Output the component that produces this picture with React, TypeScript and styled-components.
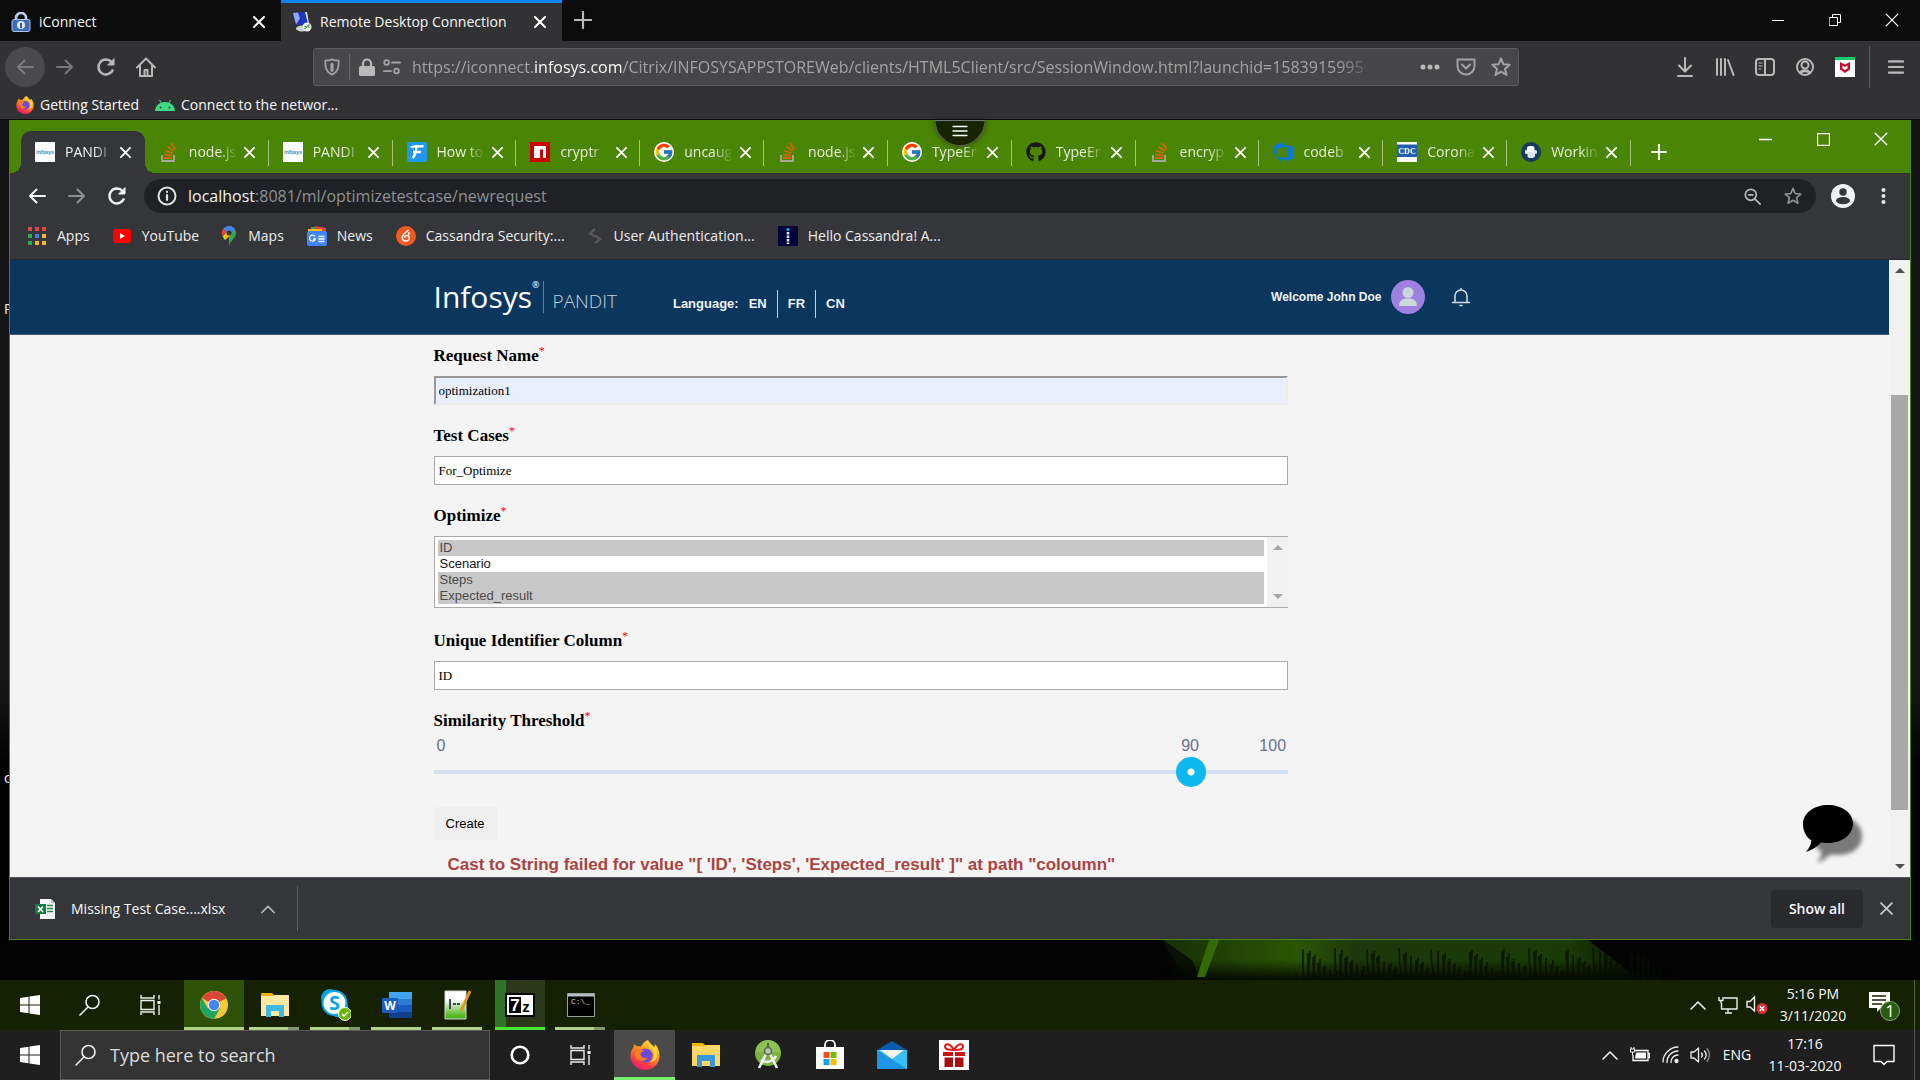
import React from "react";
import styled, { createGlobalStyle, css } from "styled-components";
import { FaGithub } from "react-icons/fa";
import { FcGoogle } from "react-icons/fc";

const UI = `"Open Sans", "Noto Sans", sans-serif`;
const ARIAL = `"Liberation Sans", Arial, sans-serif`;
const TIMES = `"Liberation Serif", "Times New Roman", serif`;

const GlobalStyle = createGlobalStyle`
  *, *::before, *::after { box-sizing: border-box; }
  body { margin: 0; background: #000; font-family: ${UI}; }
  button, input, select { font: inherit; color: inherit; }
  button { border: 0; padding: 0; background: none; cursor: pointer; }
  a { color: inherit; text-decoration: none; }
  svg { display: block; flex: none; }
`;

const Screen = styled.div`
  display: flex;
  flex-direction: column;
  min-height: 100vh;
  overflow: hidden;
  font-size: 14px;
  line-height: 20px;
  color: #f9f9fa;
`;

const IconButton = styled.button<{ $w?: number; $h?: number; $round?: boolean }>`
  display: flex;
  align-items: center;
  justify-content: center;
  flex: none;
  width: ${(p) => p.$w ?? 40}px;
  height: ${(p) => p.$h ?? 40}px;
  ${(p) => p.$round && css`background: #4a4a4c; border-radius: 50%;`}
`;

const Spacer = styled.div<{ $w?: number }>`
  flex: ${(p) => (p.$w ? `0 0 ${p.$w}px` : "1")};
`;

/* ---------- Outer browser ---------- */

const OuterTabs = styled.div`
  display: flex;
  align-items: stretch;
  height: 41px;
  background: #0c0c0d;
`;

const OuterTab = styled.div<{ $active?: boolean }>`
  display: flex;
  align-items: center;
  gap: 8px;
  width: 281px;
  padding: 0 2px 0 11px;
  border-top: 3px solid ${(p) => (p.$active ? "#0a84ff" : "transparent")};
  background: ${(p) => (p.$active ? "#323234" : "transparent")};
`;

const TabTitle = styled.span`
  flex: 1;
  white-space: nowrap;
`;

const OuterNav = styled.div`
  display: flex;
  align-items: center;
  height: 48px;
  padding: 4px 4px 0 5px;
  background: #323234;
  color: #b9b9ba;
`;

const OuterUrl = styled.div`
  display: flex;
  align-items: center;
  flex: 1;
  min-width: 0;
  height: 38px;
  border: 1px solid #5c5c5e;
  border-radius: 3px;
  background: #474749;
  color: #a3a3a5;
`;

const UrlText = styled.div`
  flex: 1;
  min-width: 0;
  margin: 0 35px 0 7px;
  overflow: hidden;
  white-space: nowrap;
  font-size: 16px;
  line-height: 24px;
  mask-image: linear-gradient(to right, #000 calc(100% - 40px), transparent);
  b { font-weight: 400; color: #f9f9fa; }
`;

const VLine = styled.span<{ $h: number; $c: string; $m?: string }>`
  flex: none;
  width: 1px;
  height: ${(p) => p.$h}px;
  margin: ${(p) => p.$m ?? "0"};
  background: ${(p) => p.$c};
`;

const OuterBookmarks = styled.div`
  display: flex;
  align-items: center;
  gap: 16px;
  height: 31px;
  padding: 2px 16px 0;
  background: #323234;
  border-bottom: 1px solid #0c0c0d;
`;

const Bookmark = styled.a<{ $gap?: number }>`
  display: flex;
  align-items: center;
  gap: ${(p) => p.$gap ?? 6}px;
  white-space: nowrap;
`;

/* ---------- Remote desktop ---------- */

const Remote = styled.div`
  position: relative;
  display: flex;
  flex-direction: column;
  flex: 1;
  padding: 0 9px;
  background: linear-gradient(#141414, #171717 65%, #020202 75%, #020202);
`;

const IconLabelPeek = styled.span<{ $top: number }>`
  position: absolute;
  left: 4px;
  top: ${(p) => p.$top}px;
  font-size: 14px;
  line-height: 20px;
`;

const Window = styled.div`
  position: relative;
  display: flex;
  flex-direction: column;
  flex: 1;
  border: 1px solid #4b8505;
  border-top: 0;
`;

const SessionHandle = styled.button`
  position: absolute;
  left: 50%;
  top: 0;
  transform: translateX(-50%);
  display: flex;
  justify-content: center;
  align-items: flex-start;
  width: 51px;
  height: 26px;
  padding-top: 3px;
  border: 1px solid #5a5f4c;
  border-top-color: #777;
  border-radius: 0 0 26px 26px;
  background: #172400;
  box-shadow: 0 0 6px rgba(0, 0, 0, 0.4);
`;

const TabStrip = styled.div`
  display: flex;
  align-items: flex-start;
  height: 53px;
  padding-left: 11px;
  background: #4b8505;
`;

const Tabs = styled.div`
  display: flex;
  flex: 0 1 1610px;
  min-width: 0;
  padding-top: 11px;
`;

const InnerTab = styled.div<{ $active?: boolean }>`
  position: relative;
  display: flex;
  align-items: center;
  flex: 1 1 0;
  min-width: 0;
  height: 42px;
  padding: 0 9px 0 14px;
  border-radius: 10px 10px 0 0;
  background: ${(p) => (p.$active ? "#35363a" : "transparent")};
  color: ${(p) => (p.$active ? "#f1f3f4" : "#e8f0df")};
  ${(p) =>
    p.$active
      ? css`
          &::before, &::after {
            content: "";
            position: absolute;
            bottom: 0;
            width: 10px;
            height: 10px;
          }
          &::before { left: -10px; background: radial-gradient(circle at 0 0, transparent 10px, #35363a 10px); }
          &::after { right: -10px; background: radial-gradient(circle at 100% 0, transparent 10px, #35363a 10px); }
        `
      : css`
          &::after {
            content: "";
            position: absolute;
            right: 0;
            top: 9px;
            width: 1px;
            height: 26px;
            background: #a5c282;
          }
        `}
`;

const InnerTitle = styled.span`
  flex: 1;
  min-width: 0;
  margin: 0 2px 0 10px;
  overflow: hidden;
  white-space: nowrap;
  mask-image: linear-gradient(to right, #000 60%, transparent);
`;

const Toolbar = styled.div`
  display: flex;
  align-items: center;
  height: 40px;
  padding: 6px 7px 0 7px;
  background: #35363a;
`;

const Omnibox = styled.div`
  display: flex;
  align-items: center;
  flex: 1;
  gap: 11px;
  height: 34px;
  margin: 0 7px;
  padding: 0 8px 0 13px;
  border-radius: 17px;
  background: #202124;
  font-size: 16px;
  line-height: 24px;
  color: #8d9196;
  b { font-weight: 400; color: #f1f3f4; }
`;

const InnerBookmarks = styled.div`
  display: flex;
  align-items: center;
  gap: 23px;
  height: 47px;
  padding: 0 18px;
  background: #35363a;
  border-bottom: 1px solid #26272a;
  color: #eceef0;
`;

/* ---------- Web page ---------- */

const Viewport = styled.div`
  display: flex;
  flex: 1 0 auto;
  height: 617px;
  overflow: hidden;
  background: #f4f4f4;
`;

const Page = styled.div`
  position: relative;
  flex: 1;
  min-width: 0;
`;

const SiteHeader = styled.header`
  height: 75px;
  background: #0b375f;
  border-bottom: 1px solid #3f5f80;
`;

const Container = styled.div`
  display: flex;
  align-items: center;
  width: 100%;
  max-width: 1032px;
  height: 100%;
  margin: 0 auto;
`;

const Logo = styled.a`
  display: flex;
  align-items: center;
  font-size: 30px;
  line-height: 40px;
  color: #fff;
  sup { align-self: flex-start; font-size: 9px; line-height: 16px; }
`;

const Product = styled.span`
  padding-top: 8px;
  font-size: 19px;
  font-weight: 300;
  line-height: 24px;
  color: #c3cfdb;
`;

const LangNav = styled.nav`
  display: flex;
  align-items: center;
  margin: 13px 0 0 56px;
  font: 700 13px/28px ${ARIAL};
  color: #eef2f6;
  a { padding: 0 10px; }
  a + a { border-left: 1px solid #c3cfdb; }
`;

const UserArea = styled.div`
  display: flex;
  align-items: center;
  gap: 9px;
  margin: 0 -22px 0 auto;
  font: 700 12px/16px ${ARIAL};
  color: #eef2f6;
`;

const FormArea = styled.main`
  max-width: 1032px;
  margin: 0 auto;
  padding-top: 10px;
`;

const Form = styled.form`
  width: 83%;
  padding-right: 2px;
  color: #000;
`;

const Field = styled.div<{ $after?: number }>`
  display: flex;
  flex-direction: column;
  margin-bottom: ${(p) => p.$after ?? 20}px;
`;

const Label = styled.label`
  margin-bottom: 9px;
  font: 700 17px/22px ${TIMES};
  sup { font-size: 12px; font-weight: 400; line-height: 0; color: #f00; vertical-align: 6px; }
`;

const TextInput = styled.input<{ $filled?: boolean }>`
  width: 100%;
  height: 29px;
  padding: 0 4px;
  border: 1px solid #a9a9a9;
  background: #fff;
  font: 13px/16px ${TIMES};
  ${(p) =>
    p.$filled &&
    css`
      padding: 0 3px;
      border: 2px solid;
      border-color: #999 #ededed #ededed #999;
      background: #e8f0fe;
    `}
`;

const ListFrame = styled.div`
  display: flex;
  height: 72px;
  border: 1px solid #a9a9a9;
  border-right: 0;
  background: #fff;
`;

const ListBox = styled.select`
  flex: 1;
  min-width: 0;
  height: 70px;
  padding: 3px;
  border: 0;
  outline: 0;
  background: #fff;
  overflow: hidden;
  font: 13px/16px ${ARIAL};
  option { min-height: 16px; height: 16px; padding: 0 2px; color: #111; }
  option:checked { color: #4a4a4a; background: #c8c8c8 linear-gradient(#c8c8c8, #c8c8c8); }
`;

const ScrollRail = styled.div`
  display: flex;
  flex-direction: column;
  align-items: center;
  justify-content: space-between;
  flex: none;
  width: 21px;
  padding: 8px 0;
  background: #f1f1f1;
`;

const Arrow = styled.span<{ $down?: boolean; $dim?: boolean }>`
  width: 0;
  height: 0;
  border: 5px solid transparent;
  ${(p) => (p.$down ? "border-bottom-width: 0; border-top-color" : "border-top-width: 0; border-bottom-color")}: ${(p) =>
    p.$dim ? "#a3a3a3" : "#505050"};
`;

const ScrollTrack = styled.div`
  display: flex;
  flex-direction: column;
  flex: 1;
  width: 17px;
  padding: 122px 0 54px;
`;

const ScrollThumb = styled.div`
  flex: 1;
  background: #a8a8a8;
`;

const SliderLegend = styled.div`
  display: grid;
  grid-template-columns: 1fr 40px 76px;
  padding: 0 2px 0 3px;
  margin-top: -5px;
  font: 16px/20px ${ARIAL};
  color: #6a6f92;
  output { text-align: center; }
  span:last-child { text-align: right; }
`;

const Slider = styled.input`
  appearance: none;
  width: 100%;
  height: 30px;
  margin: 1px 0 0;
  background: transparent;
  &::-webkit-slider-runnable-track { height: 4px; background: #d7e0f3; }
  &::-webkit-slider-thumb {
    appearance: none;
    width: 30px;
    height: 30px;
    margin-top: -13px;
    border-radius: 50%;
    background: radial-gradient(circle, #fff 3px, #0db8f1 4px);
  }
`;

const CreateButton = styled.button`
  height: 33px;
  padding: 0 12px;
  background: #efefef;
  font: 13px/16px ${ARIAL};
  color: #000;
`;

const ErrorText = styled.p`
  margin: 14px 0 0;
  padding-left: 14px;
  font: 700 17px/22px ${ARIAL};
  white-space: nowrap;
  color: #a94442;
`;

const ChatButton = styled.button`
  position: absolute;
  right: 22px;
  bottom: 4px;
`;

/* ---------- Download shelf ---------- */

const Shelf = styled.div`
  display: flex;
  align-items: center;
  height: 62px;
  padding-left: 25px;
  border-top: 1px solid #55565a;
  background: #35363a;
`;

const ShowAll = styled.button`
  height: 38px;
  padding: 0 18px;
  border-radius: 4px;
  background: #292a2d;
  font-weight: 600;
`;

const Wallpaper = styled.div`
  display: flex;
  justify-content: flex-end;
  height: 40px;
  margin: 0 -9px;
  padding-right: 245px;
  overflow: hidden;
  background: #030303;
`;

/* ---------- Task bars ---------- */

const Taskbar = styled.div<{ $bg: string }>`
  display: flex;
  align-items: stretch;
  height: 50px;
  background: ${(p) => p.$bg};
`;

const TaskButton = styled.button<{ $w?: number; $bar?: string; $bg?: string; $wide?: boolean; $double?: boolean }>`
  position: relative;
  display: flex;
  align-items: center;
  justify-content: center;
  flex: none;
  width: ${(p) => p.$w ?? 60}px;
  background: ${(p) => p.$bg ?? "none"};
  ${(p) =>
    p.$bar &&
    css`
      &::after {
        content: "";
        position: absolute;
        left: ${p.$wide ? 0 : 5}px;
        right: ${p.$wide ? 0 : 6}px;
        bottom: 0;
        height: 3px;
        background: ${p.$double ? `linear-gradient(to right, ${p.$bar} 78%, #82956b 78%)` : p.$bar};
      }
    `}
`;

const SearchBox = styled.label`
  display: flex;
  align-items: center;
  gap: 12px;
  width: 430px;
  padding-left: 14px;
  border: 1px solid #5b5b5b;
  background: #333;
  input {
    flex: 1;
    min-width: 0;
    padding: 0 0 0 1px;
    border: 0;
    outline: 0;
    background: none;
    font-size: 18px;
    line-height: 24px;
  }
  input::placeholder { color: #dcdcdc; opacity: 1; }
`;

const Tray = styled.div`
  display: flex;
  align-items: center;
  margin-left: auto;
`;

const Clock = styled.time<{ $w: number }>`
  width: ${(p) => p.$w}px;
  padding-bottom: 1px;
  text-align: center;
  line-height: 22px;
  white-space: nowrap;
`;

/* ---------- Drawings ---------- */

type LineProps = { size?: number; w?: number; color?: string; children: React.ReactNode; box?: number };
const Line = ({ size = 20, w = 2, color = "currentColor", box = 20, children }: LineProps) => (
  <svg width={size} height={size} viewBox={`0 0 ${box} ${box}`} fill="none" stroke={color} strokeWidth={w} strokeLinecap="round" strokeLinejoin="round">
    {children}
  </svg>
);

const Cross = ({ size = 11, w = 2, color = "#fff" }: { size?: number; w?: number; color?: string }) => (
  <Line size={size} w={w} box={12} color={color}><path d="M1 1l10 10M11 1L1 11" /></Line>
);
const Back = ({ color }: { color?: string }) => <Line color={color}><path d="M18 10H3M9.500 3.500L3 10l6.500 6.500" /></Line>;
const Forward = ({ color }: { color?: string }) => <Line color={color}><path d="M2 10h15M10.500 3.500L17 10l-6.500 6.500" /></Line>;
const Reload = ({ color }: { color?: string }) => (
  <Line color={color} w={2.4}><path d="M17 12.500A7.500 7.500 0 1 1 15.600 5L17 6.500" strokeLinecap="butt" /><path d="M18 2v6h-6z" fill={color ?? "currentColor"} strokeWidth="1" /></Line>
);
const Chevron = ({ size = 16, w = 1.6, color = "#eee" }: { size?: number; w?: number; color?: string }) => (
  <Line size={size} w={w} color={color} box={16}><path d="M1 12l7-7 7 7" /></Line>
);
const Magnifier = () => <Line size={22} w={1.6} color="#eee" box={22}><circle cx="13.500" cy="8" r="6.500" /><path d="M9 13l-8 8" /></Line>;
const StarIcon = ({ size = 20, w = 2 }: { size?: number; w?: number }) => (
  <Line size={size} w={w}><path d="M10 1.500l2.500 5.800 6.200.5-4.700 4.100 1.500 6.100L10 14.700 4.500 18 6 11.900 1.300 7.800l6.200-.5z" /></Line>
);
const WindowsLogo = () => (
  <svg width="20" height="20" viewBox="0 0 20 20" fill="#fff">
    <path d="M0 3l8.500-1.200v7.800H0zM9.500 1.600L20 0v9.600H9.500zM0 10.500h8.500v7.800L0 17zM9.500 10.500H20V20L9.500 18.500z" />
  </svg>
);
const TaskView = () => (
  <svg width="21" height="20" viewBox="0 0 21 20" fill="none" stroke="#eee" strokeWidth="1.400">
    <path d="M1 0v3h13V0M1 20v-3h13v3M1 5.500h13v9H1zM19 0v4.500M19 10v10" /><path d="M17.500 6h3v3h-3z" fill="#fff" stroke="none" />
  </svg>
);
const Avatar = ({ size, bg, fg }: { size: number; bg: string; fg: string }) => (
  <svg width={size} height={size} viewBox="0 0 34 34">
    <circle cx="17" cy="17" r="17" fill={bg} /><ellipse cx="17" cy="12.500" rx="5.500" ry="5.500" fill={fg} /><path d="M8 26c0-6 4-7.500 9-7.500s9 1.500 9 7.500z" fill={fg} />
  </svg>
);
const ProfileBadge = () => (
  <svg width="24" height="24" viewBox="0 0 24 24"><circle cx="12" cy="12" r="12" fill="#f1f3f4" /><circle cx="12" cy="8" r="3.700" fill="#35363a" /><ellipse cx="12" cy="16.600" rx="7" ry="3.600" fill="#35363a" /></svg>
);

const PadLock = () => (
  <svg width="20" height="20" viewBox="0 0 20 20">
    <path d="M5 9V6a5 5 0 0 1 10 0v3" fill="none" stroke="#b8cdf2" strokeWidth="2.600" /><rect x="1" y="7.500" width="18" height="12" rx="2" fill="#3f6cb8" stroke="#a9c2ee" /><circle cx="10" cy="13" r="4" fill="#dfe9fb" /><path d="M9 11h2v5H9z" fill="#2b56a5" />
  </svg>
);
const RemotePc = () => (
  <svg width="20" height="20" viewBox="0 0 20 20">
    <ellipse cx="10" cy="16.500" rx="6" ry="3" fill="#cfd3da" /><path d="M1 1l12-1 3 12-12 1z" fill="#2034c4" /><path d="M1 1l5-.5 2 6-4 6z" fill="#8fa8f5" /><path d="M13 0h2l2 11-1 1z" fill="#d9deea" /><circle cx="15" cy="15" r="4.500" fill="#e8efe6" /><path d="M12.500 14l2 1.500-2 1.500M17.500 12.500l-2 1.500 2 1.500" stroke="#2f9b34" strokeWidth="1.200" fill="none" />
  </svg>
);
const Firefox = ({ size }: { size: number }) => (
  <svg width={size} height={size} viewBox="0 0 30 30">
    <defs>
      <linearGradient id={`fx${size}`} x1=".8" y1="0" x2=".3" y2="1"><stop offset="0" stopColor="#ffe840" /><stop offset=".4" stopColor="#ff9a1e" /><stop offset=".75" stopColor="#ff4040" /><stop offset="1" stopColor="#e5157a" /></linearGradient>
    </defs>
    <path d="M18 0c1 3 5 5 6 7 1-1 1-2 .8-3C28 7 30 12 29.500 17 28.500 25 22.500 30 15 30 7 30 .5 24 .5 16c0-4 1.500-7 3-9l.8-3c1 1 2 2 2.500 2.500C8 6 9.500 6 11 6.500 13 3 15 1 18 0z" fill={`url(#fx${size})`} />
    <circle cx="15.500" cy="15.500" r="7" fill="#6a4be0" /><path d="M6 9c3-1 6 0 8 2.500-2 0-4 1-3.500 3 .5 3 4 4 7 3-2 4-8 5-11 1S5 12 6 9z" fill="#ff7a26" /><path d="M18 2c0 5 7 7 6 14-.5 3-2 5-4 6 7 0 9-8 6-14-3-1-6-3-8-6z" fill="#ffd43a" />
  </svg>
);
const Android = () => (
  <svg width="20" height="12" viewBox="0 0 20 12" fill="#3ddc84"><path d="M0 12C.4 6.500 4.500 3 10 3s9.600 3.500 10 9z" /><path d="M4.500 1l2 3.500M15.500 1l-2 3.500" stroke="#3ddc84" strokeWidth="1" /><circle cx="5.500" cy="8.500" r="1" fill="#323234" /><circle cx="14.500" cy="8.500" r="1" fill="#323234" /></svg>
);
const McAfee = () => (
  <svg width="20" height="20" viewBox="0 0 20 20"><path d="M0 0h20v20H0z" fill="#fff" /><path d="M0 0h20v3H0z" fill="#0fce6c" /><path d="M5 5l5 2.500L15 5v7.500L10 16l-5-3.500z" fill="#c8102e" /><path d="M7.500 8.500L10 10l2.500-1.500v3L10 13l-2.500-1.500z" fill="#fff" /></svg>
);
const PanditIcon = () => (
  <svg width="20" height="20" viewBox="0 0 20 20"><path d="M0 0h20v20H0z" fill="#fff" /><text x="10" y="12" textAnchor="middle" fontSize="5" fontWeight="700" fontFamily="Open Sans" fill="#3c8fb8">Infosys</text></svg>
);
const StackOverflow = () => (
  <svg width="20" height="20" viewBox="0 0 20 20" fill="none" strokeWidth="1.800"><path d="M3 13v6h12v-6" stroke="#a9a9a4" /><path d="M5 16h8M5.200 12.700l7.800.8M6.200 8.800l7.500 2.200M8.500 4.800l6.500 4M12 1.200l4.600 6" stroke="#d0680c" /></svg>
);
const Flaticon = () => (
  <svg width="20" height="20" viewBox="0 0 20 20"><rect width="20" height="20" rx="2" fill="#2196f3" /><path d="M4 5.500C7 3 11 5 16.500 4M9.500 4.500C9 9 8 14 5.500 16M6 10h8" fill="none" stroke="#fff" strokeWidth="2.300" /></svg>
);
const Npm = () => <svg width="20" height="20" viewBox="0 0 20 20"><path d="M0 0h20v20H0z" fill="#cb0000" /><path d="M4 4h12v12h-3V7.500h-3V16H4z" fill="#fff" /></svg>;
const Azure = () => (
  <svg width="20" height="20" viewBox="0 0 20 20" fill="#0a78d4"><path d="M0 6.500L3.500 2 11 0v3.200L18 4l2 1v11l-4.500 3L8 17v3l-5-5.500 12 1.500V4.500L3.500 7v6.500L0 12z" /></svg>
);
const Cdc = () => (
  <svg width="20" height="20" viewBox="0 0 20 20"><path d="M0 0h20v20H0z" fill="#fff" /><path d="M0 2.500h20V15H0z" fill="#1f5fad" /><text x="10" y="12" textAnchor="middle" fontSize="8" fontWeight="700" fontFamily="Liberation Serif" fill="#fff">CDC</text></svg>
);
const Python = () => (
  <svg width="20" height="20" viewBox="0 0 20 20"><circle cx="10" cy="10" r="10" fill="#173a5e" /><path d="M6 9.500V6c0-1.500 1.500-2 4-2s3.500.6 3.500 2v2.500c0 1-.7 1.500-1.700 1.500H8.500C7 10 6.500 11 6.500 12H5c-1.300 0-1.300-4.500.3-4.500" fill="#fff" /><path d="M14 10.500V14c0 1.500-1.500 2-4 2s-3.500-.6-3.500-2v-2.500c0-1 .7-1.500 1.700-1.500h3.300c1.500 0 2-1 2-2H15c1.300 0 1.300 4.500-.3 4.500" fill="#dfe6ec" /></svg>
);
const AppsIcon = () => (
  <svg width="18" height="18" viewBox="0 0 18 18">
    {["#e0493e", "#e0493e", "#e0493e", "#3aa757", "#3b82f0", "#f2b632", "#3aa757", "#f2b632", "#f2b632"].map((c, i) => (
      <rect key={i} x={(i % 3) * 7} y={Math.floor(i / 3) * 7} width="4" height="4" fill={c} />
    ))}
  </svg>
);
const YouTube = () => <svg width="18" height="14" viewBox="0 0 18 14"><rect width="18" height="14" rx="3" fill="#f00" /><path d="M7 4l5 3-5 3z" fill="#fff" /></svg>;
const MapPin = () => (
  <svg width="14" height="20" viewBox="0 0 14 20"><path d="M7 0a7 7 0 0 1 7 7c0 5-5 6-7 13z" fill="#34a853" /><path d="M7 0a7 7 0 0 1 6 3.500L3 14C1 11.500 0 10 0 7a7 7 0 0 1 7-7z" fill="#4285f4" /><path d="M1.500 2.600L5 6 .8 10.500C-.5 7-.2 4.500 1.500 2.600z" fill="#ea4335" /><path d="M.8 10.500L5 6l4 3-6 5z" fill="#fbbc04" /><circle cx="7" cy="7" r="2.500" fill="#35363a" /></svg>
);
const News = () => (
  <svg width="20" height="20" viewBox="0 0 20 20"><path d="M4 1h12v6H4z" fill="#34a853" /><path d="M8 0l11 2v6H7z" fill="#ea4335" /><path d="M1 3h14v6H1z" fill="#fbbc04" /><rect y="5" width="20" height="15" rx="2" fill="#4285f4" /><path d="M8 10.500a3 3 0 1 0 .4 2.500H6M11.500 10.500h6M11.500 13h6M11.500 15.500h6" fill="none" stroke="#fff" strokeWidth="1.300" /></svg>
);
const OrangeDot = () => <svg width="20" height="20" viewBox="0 0 20 20"><circle cx="10" cy="10" r="10" fill="#f15a22" /><path d="M12.500 4L7.500 8.500c-2.500 2.500-1.500 6.500 2.300 6.500 4.200 0 4.700-5.500 1.200-5.500-1.700 0-2.500 1-2.500 2.300M12.800 6v3" fill="none" stroke="#fff" strokeWidth="1.400" /></svg>;
const GreyS = () => <svg width="14" height="16" viewBox="0 0 14 16"><path d="M7 1L2 5.500l5 3M7 7.500l5 3.500-5 4" fill="none" stroke="#55575b" strokeWidth="2.400" /></svg>;
const HelloIcon = () => (
  <svg width="20" height="20" viewBox="0 0 20 20"><rect width="20" height="20" rx="1" fill="#04043a" /><path d="M10 6v12" stroke="#e6e8ff" strokeWidth="2.600" strokeDasharray="2.500 1" /><circle cx="10" cy="3.500" r="1.500" fill="#13b5ea" /></svg>
);
const Excel = () => (
  <svg width="20" height="20" viewBox="0 0 20 20"><path d="M5 0h11l4 4v16H5z" fill="#f4f4f4" /><path d="M16 0v4h4z" fill="#b9b9b9" /><path d="M12 6.500h6M12 9.500h6M12 12.500h6" stroke="#1e8e4e" strokeWidth="1.600" /><path d="M0 5h11v10H0z" fill="#107c41" /><path d="M3 7.500l5 5.500M8 7.500L3 13" stroke="#fff" strokeWidth="1.600" /></svg>
);
const ChromeIcon = () => (
  <svg width="28" height="28" viewBox="0 0 28 28"><circle cx="14" cy="14" r="14" fill="#fcc934" /><path d="M14 14L1.900 7A14 14 0 0 1 26.100 7z" fill="#db4437" /><path d="M1.900 7A14 14 0 0 0 14 28l6-10.500L14 14 8 17.500z" fill="#1fa463" /><path d="M14 7h12.100L24 8.500h-8z" fill="#db4437" /><circle cx="14" cy="14" r="6.200" fill="#f3f3f3" /><circle cx="14" cy="14" r="5.200" fill="#4285f4" /></svg>
);
const Folder = ({ light, accent }: { light: string; accent: string }) => (
  <svg width="28" height="24" viewBox="0 0 28 24"><path d="M0 0h11l3 3H0z" fill="#f0b400" /><path d="M0 3h12l2-1h14v21H0z" fill={light} /><path d="M5 12h18v12h-5v-6h-8v6H5z" fill={accent} /></svg>
);
const Skype = () => (
  <svg width="30" height="32" viewBox="0 0 30 32"><circle cx="9" cy="9" r="9" fill="#0aa5e8" /><circle cx="18" cy="19" r="9.500" fill="#0aa5e8" /><circle cx="13.500" cy="14" r="12" fill="#fff" stroke="#0aa5e8" strokeWidth="2" /><text x="13.500" y="21" textAnchor="middle" fontSize="20" fontWeight="700" fontFamily="Open Sans" fill="#0aa5e8">S</text><circle cx="24" cy="25" r="6.500" fill="#6bb700" stroke="#fff" /><path d="M21 25l2 2 4-4" stroke="#fff" strokeWidth="1.500" fill="none" /></svg>
);
const Word = () => (
  <svg width="30" height="26" viewBox="0 0 30 26"><path d="M7 0h23v7H7z" fill="#41a5ee" /><path d="M7 7h23v6H7z" fill="#2b7cd3" /><path d="M7 13h23v7H7z" fill="#185abd" /><path d="M7 20h23v6H7z" fill="#103f91" /><rect y="6" width="16" height="15" rx="1" fill="#1b5cbe" /><text x="8" y="18" textAnchor="middle" fontSize="12" fontWeight="700" fontFamily="Open Sans" fill="#fff">W</text></svg>
);
const Notepad = () => (
  <svg width="28" height="30" viewBox="0 0 28 30"><defs><linearGradient id="npp" x2="0" y2="1"><stop offset=".3" stopColor="#fff" /><stop offset=".9" stopColor="#4fb81c" /></linearGradient></defs><path d="M1 1h21v28H1z" fill="url(#npp)" stroke="#d5d5d5" /><path d="M6 9v10M9 14h3M13 14h3" stroke="#445" strokeWidth="2" /><path d="M26 1L17 21" stroke="#e09a20" strokeWidth="3" /></svg>
);
const SevenZip = () => (
  <svg width="30" height="24" viewBox="0 0 30 24"><path d="M1 1h28v22H1z" fill="#fff" stroke="#000" strokeWidth="2" /><path d="M4 4h12v16H4z" fill="#000" /><text x="10" y="18" textAnchor="middle" fontSize="17" fontWeight="700" fontFamily="Liberation Sans" fill="#fff">7</text><text x="21" y="19" textAnchor="middle" fontSize="15" fontWeight="700" fontFamily="Liberation Sans" fill="#000">z</text></svg>
);
const Terminal = () => (
  <svg width="28" height="24" viewBox="0 0 28 24"><path d="M.5.5h27v23H.5z" fill="#000" stroke="#9aa0a0" /><path d="M1 1h26v2.500H1z" fill="#b8bdbd" /><text x="4" y="11" fontSize="8" fontFamily="Liberation Mono" fill="#ddd">C:\_</text></svg>
);
const Studio = () => (
  <svg width="26" height="30" viewBox="0 0 26 30"><circle cx="13" cy="13" r="13" fill="#7cb342" /><path d="M1 12a12 12 0 0 1 24 0z" fill="#97c95c" opacity=".6" /><path d="M13 10L4 28M13 10l9 18M6 20c5 3.500 12 2 15-4" stroke="#f1f1f1" strokeWidth="2.600" fill="none" /><circle cx="13" cy="11" r="3.500" fill="#b9c4b0" stroke="#565" strokeWidth="1.500" /><path d="M13 3v5" stroke="#565" strokeWidth="2" /></svg>
);
const Store = () => (
  <svg width="28" height="30" viewBox="0 0 28 30"><path d="M9 8V5a5 5 0 0 1 10 0v3" fill="none" stroke="#fff" strokeWidth="1.800" /><path d="M0 7h28v22H0z" fill="#fff" /><path d="M7.500 12h6v6h-6z" fill="#f25022" /><path d="M14.500 12h6v6h-6z" fill="#7fba00" /><path d="M7.500 19h6v6h-6z" fill="#00a4ef" /><path d="M14.500 19h6v6h-6z" fill="#ffb900" /></svg>
);
const Mail = () => (
  <svg width="30" height="28" viewBox="0 0 30 28"><path d="M15 0l15 9v2H0V9z" fill="#0a5bb0" /><path d="M0 9h30v19H0z" fill="#35c0f5" /><path d="M0 9l30 19H0z" fill="#1f94e4" /><path d="M3 9h24L15 18z" fill="#f3f3f3" /></svg>
);
const Gift = () => (
  <svg width="30" height="30" viewBox="0 0 30 30"><path d="M0 0h30v30H0z" fill="#fff" /><path d="M15 10C11 3 6 3 6 6.500S11 10 15 10zm0 0c4-7 9-7 9-3.500S19 10 15 10z" fill="none" stroke="#e01b1b" strokeWidth="2" /><path d="M4 12h10v4H4zM16 12h10v4H16z" fill="#d01313" /><path d="M5.500 17.500H14V27H5.500zM16 17.500h8.500V27H16z" fill="#a80f12" /></svg>
);
const ChatBubble = () => (
  <svg width="66" height="72" viewBox="0 0 66 72">
    <defs><filter id="soft" x="-20%" y="-20%" width="140%" height="140%"><feGaussianBlur stdDeviation="2" /></filter></defs>
    <path d="M36 15c14 0 25 8 25 20S51 54 36 54c-2 0-5 0-7-.5-4 4-8 7-13 8 2-3 4-6 5-10-5-4-10-9-10-16 0-12 11-20.500 25-20.500z" fill="#000" opacity=".5" filter="url(#soft)" />
    <path d="M27 4c14 0 25 8 25 18.500S42 42 27 42c-2 0-5 0-7-.5C16 46 11 49 5 51c3-4 5-7 5.500-11.500C5 36 2 30 2 23 2 12 13 4 27 4z" fill="#000" />
  </svg>
);

const blades = Array.from({ length: 120 }, (_, i) => {
  const height = 8 + ((i * 37 + (i % 7) * 11) % 25);
  const lean = ((i * 13) % 9) - 4;
  return `M${145 + i * 3} 40q${lean} ${-height / 2} ${lean} ${-height}`;
}).join("");

const Grass = () => (
  <svg width="520" height="40" viewBox="0 0 520 40">
    <defs>
      <linearGradient id="hill"><stop offset="0" stopColor="#172f06" /><stop offset=".28" stopColor="#2b5604" /><stop offset=".4" stopColor="#1d380a" /><stop offset=".85" stopColor="#1a3b06" /><stop offset="1" stopColor="#0a1202" /></linearGradient>
      <linearGradient id="dusk" x2="0" y2="1"><stop offset=".5" stopColor="#000" stopOpacity="0" /><stop offset="1" stopColor="#020401" stopOpacity=".9" /></linearGradient>
    </defs>
    <path d="M8 0h425l52 40H30z" fill="url(#hill)" /><path d="M8 0l29 20 8 20H20z" fill="#050a03" opacity=".8" />
    <path d="M0 0h520v40H0z" fill="url(#dusk)" /><path d="M54 0h10L50 37h-8z" fill="#356a0a" />
    <path d={blades} fill="none" stroke="#070f03" strokeWidth="1.800" opacity=".75" />
  </svg>
);

const Disc = styled.span`
  display: flex;
  flex: none;
  border-radius: 50%;
  background: #fff;
`;

const GoogleIcon = () => <Disc><FcGoogle size={20} /></Disc>;

const tabs = [
  { title: "PANDI", icon: <PanditIcon /> },
  { title: "node.js", icon: <StackOverflow /> },
  { title: "PANDI", icon: <PanditIcon /> },
  { title: "How to", icon: <Flaticon /> },
  { title: "cryptr", icon: <Npm /> },
  { title: "uncaug", icon: <GoogleIcon /> },
  { title: "node.js", icon: <StackOverflow /> },
  { title: "TypeEr", icon: <GoogleIcon /> },
  { title: "TypeEr", icon: <FaGithub size={20} color="#191717" /> },
  { title: "encryp", icon: <StackOverflow /> },
  { title: "codeb", icon: <Azure /> },
  { title: "Corona", icon: <Cdc /> },
  { title: "Workin", icon: <Python /> },
];

const bookmarks = [
  { label: "Apps", icon: <AppsIcon />, gap: 11 },
  { label: "YouTube", icon: <YouTube />, gap: 11 },
  { label: "Maps", icon: <MapPin />, gap: 12 },
  { label: "News", icon: <News />, gap: 10 },
  { label: "Cassandra Security:...", icon: <OrangeDot />, gap: 10 },
  { label: "User Authentication...", icon: <GreyS />, gap: 12 },
  { label: "Hello Cassandra! A...", icon: <HelloIcon />, gap: 10 },
];

const Required = () => <sup>*</sup>;

export default function App() {
  return (
    <Screen>
      <GlobalStyle />
      <OuterTabs>
        <OuterTab>
          <PadLock /><TabTitle>iConnect</TabTitle>
          <IconButton aria-label="Close tab" $h={30}><Cross size={12} /></IconButton>
        </OuterTab>
        <OuterTab $active>
          <RemotePc /><TabTitle>Remote Desktop Connection</TabTitle>
          <IconButton aria-label="Close tab" $h={30}><Cross size={12} /></IconButton>
        </OuterTab>
        <IconButton aria-label="New tab" $w={42}><Line size={18} w={2.4} color="#b9b9ba"><path d="M10 1v18M1 10h18" /></Line></IconButton>
        <Spacer />
        <IconButton aria-label="Minimize" $w={57}><Line size={12} w={1} box={12} color="#fff"><path d="M0 6.500h12" /></Line></IconButton>
        <IconButton aria-label="Restore" $w={57}><Line size={12} w={1} box={12} color="#fff"><path d="M.5 3.500h8v8h-8zM3.500 3V.5h8v8H9" /></Line></IconButton>
        <IconButton aria-label="Close" $w={57}><Cross size={14} w={1} /></IconButton>
      </OuterTabs>
      <OuterNav>
        <IconButton aria-label="Back" $round><Back color="#7b7b7d" /></IconButton>
        <IconButton aria-label="Forward"><Forward color="#77777a" /></IconButton>
        <Spacer $w={1} />
        <IconButton aria-label="Reload"><Reload /></IconButton>
        <IconButton aria-label="Home"><Line><path d="M1 10.500L10 1.500l9 9M4 9v10h12V9M8.500 19v-6h3v6" /></Line></IconButton>
        <Spacer $w={147} />
        <OuterUrl>
          <IconButton aria-label="Tracking protection" $w={35} $h={36}><Line size={18}><path d="M10 1.500c3 1.500 5 1.500 7.500 1.500 0 8-1 12.500-7.500 15.500C3.500 15.500 2.500 11 2.500 3 5 3 7 3 10 1.500z" /><path d="M10 7v6.500" strokeWidth="3.500" /></Line></IconButton>
          <VLine $h={26} $c="#6a6a6c" $m="0 5px 0 0" />
          <IconButton aria-label="Site security" $w={24} $h={36}><svg width="16" height="18" viewBox="0 0 16 18"><path d="M4 8V5.500a4 4 0 0 1 8 0V8" fill="none" stroke="#b9b9ba" strokeWidth="2.200" /><rect y="8" width="16" height="10" rx="1.500" fill="#b9b9ba" /></svg></IconButton>
          <IconButton aria-label="Permissions" $w={26} $h={36}><Line size={18}><circle cx="4" cy="5" r="2.600" /><path d="M10 5h9M1 14.500h8" /><circle cx="15" cy="14.500" r="2.600" /></Line></IconButton>
          <UrlText>https://iconnect.<b>infosys.com</b>/Citrix/INFOSYSAPPSTOREWeb/clients/HTML5Client/src/SessionWindow.html?launchid=1583915995</UrlText>
          <IconButton aria-label="Page actions" $w={36} $h={36}><svg width="20" height="6" fill="#b9b9ba"><circle cx="3" cy="3" r="2.500" /><circle cx="10" cy="3" r="2.500" /><circle cx="17" cy="3" r="2.500" /></svg></IconButton>
          <IconButton aria-label="Save to Pocket" $w={35} $h={36}><Line><path d="M1.500 2.500h17V9a8.500 8.500 0 0 1-17 0zM6 7.500l4 4 4-4" /></Line></IconButton>
          <IconButton aria-label="Bookmark" $w={35} $h={36}><StarIcon /></IconButton>
        </OuterUrl>
        <Spacer $w={146} />
        <IconButton aria-label="Downloads"><Line><path d="M10 1v13M4 8.500l6 6 6-6M3 19h14" /></Line></IconButton>
        <IconButton aria-label="Library"><Line><path d="M2 2v16M6 2v16M10 2v16M13 3l5.500 15" /></Line></IconButton>
        <IconButton aria-label="Sidebars"><Line><rect x="1" y="2" width="18" height="16" rx="3" /><path d="M10 2v16" /><path d="M4 6h3M4 9h3M4 12h2" strokeWidth="1.200" /></Line></IconButton>
        <IconButton aria-label="Account"><Line><circle cx="10" cy="10" r="8" /><circle cx="10" cy="8" r="3.500" /><path d="M5.500 15.500c2-2.500 7-2.500 9 0" strokeWidth="3" /></Line></IconButton>
        <IconButton aria-label="McAfee"><McAfee /></IconButton>
        <VLine $h={42} $c="#5c5c5e" $m="0 6px 0 4px" />
        <IconButton aria-label="Menu"><Line size={16} w={2.6}><path d="M1 3h18M1 10h18M1 17h18" /></Line></IconButton>
      </OuterNav>
      <OuterBookmarks>
        <Bookmark href="#"><Firefox size={18} />Getting Started</Bookmark>
        <Bookmark href="#"><Android />Connect to the networ...</Bookmark>
      </OuterBookmarks>

      <Remote>
        <IconLabelPeek $top={179}>P</IconLabelPeek>
        <IconLabelPeek $top={648}>c</IconLabelPeek>
        <Window>
          <TabStrip>
            <Tabs>
              {tabs.map((t, i) => (
                <InnerTab key={i} $active={i === 0}>
                  {t.icon}
                  <InnerTitle>{t.title}</InnerTitle>
                  <IconButton aria-label={`Close ${t.title}`} $w={20} $h={20}><Cross /></IconButton>
                </InnerTab>
              ))}
            </Tabs>
            <IconButton aria-label="New tab" $w={56} $h={64}><Line size={16} w={2.4} color="#fff"><path d="M10 1v18M1 10h18" /></Line></IconButton>
            <Spacer />
            <IconButton aria-label="Minimize window" $w={58} $h={38}><Line size={13} w={1.3} box={13} color="#fff"><path d="M0 6.500h13" /></Line></IconButton>
            <IconButton aria-label="Maximize window" $w={58} $h={38}><Line size={13} w={1.3} box={13} color="#fff"><path d="M.5.5h12v12H.500z" /></Line></IconButton>
            <IconButton aria-label="Close window" $w={58} $h={38}><Cross size={14} w={1.2} /></IconButton>
          </TabStrip>
          <Toolbar>
            <IconButton aria-label="Go back"><Back color="#f1f3f4" /></IconButton>
            <IconButton aria-label="Go forward"><Forward color="#8b8d91" /></IconButton>
            <IconButton aria-label="Reload page"><Reload color="#f1f3f4" /></IconButton>
            <Omnibox>
              <Line color="#dfe1e5"><circle cx="10" cy="10" r="8.500" /><path d="M10 9v5M10 5.800v.2" strokeWidth="2.200" /></Line>
              <span><b>localhost</b>:8081/ml/optimizetestcase/newrequest</span>
              <Spacer />
              <IconButton aria-label="Zoom" $w={29}><Line size={17} color="#b5b8bc"><circle cx="8" cy="8" r="6.500" /><path d="M13 13l6 6M5.500 8h5" /></Line></IconButton>
              <IconButton aria-label="Bookmark page" $w={30}><StarIcon size={18} w={1.8} /></IconButton>
            </Omnibox>
            <IconButton aria-label="Profile"><ProfileBadge /></IconButton>
            <IconButton aria-label="Chrome menu"><svg width="5" height="18" fill="#e8eaed"><circle cx="2.500" cy="3" r="2" /><circle cx="2.500" cy="9" r="2" /><circle cx="2.500" cy="15" r="2" /></svg></IconButton>
          </Toolbar>
          <InnerBookmarks>
            {bookmarks.map((b) => (
              <Bookmark href="#" key={b.label} $gap={b.gap}>{b.icon}{b.label}</Bookmark>
            ))}
          </InnerBookmarks>

          <Viewport>
            <Page>
              <SiteHeader>
                <Container>
                  <Logo href="#">Infosys<sup>®</sup></Logo>
                  <VLine $h={32} $c="#5f7d99" $m="0 9px 0 3px" />
                  <Product>PANDIT</Product>
                  <LangNav>
                    <span>Language:</span><a href="#">EN</a><a href="#">FR</a><a href="#">CN</a>
                  </LangNav>
                  <UserArea>
                    <span>Welcome John Doe</span>
                    <Avatar size={34} bg="#9f7fe0" fg="#ccd6dd" />
                    <IconButton aria-label="Notifications" $w={54}><Line w={1.6} color="#cfd9e2"><path d="M4 15.500V9a6 6 0 0 1 12 0v6.500M1.500 15.500h17M10 3V1.500M9 18.500h2" /></Line></IconButton>
                  </UserArea>
                </Container>
              </SiteHeader>
              <FormArea>
                <Form>
                  <Field>
                    <Label htmlFor="name">Request Name<Required /></Label>
                    <TextInput id="name" defaultValue="optimization1" $filled />
                  </Field>
                  <Field>
                    <Label htmlFor="cases">Test Cases<Required /></Label>
                    <TextInput id="cases" defaultValue="For_Optimize" />
                  </Field>
                  <Field $after={22}>
                    <Label htmlFor="optimize">Optimize<Required /></Label>
                    <ListFrame>
                      <ListBox id="optimize" multiple size={4} defaultValue={["ID", "Steps", "Expected_result"]}>
                        <option>ID</option>
                        <option>Scenario</option>
                        <option>Steps</option>
                        <option>Expected_result</option>
                      </ListBox>
                      <ScrollRail><Arrow $dim /><Arrow $down $dim /></ScrollRail>
                    </ListFrame>
                  </Field>
                  <Field>
                    <Label htmlFor="column">Unique Identifier Column<Required /></Label>
                    <TextInput id="column" defaultValue="ID" />
                  </Field>
                  <Field>
                    <Label htmlFor="threshold">Similarity Threshold<Required /></Label>
                    <SliderLegend><span>0</span><output htmlFor="threshold">90</output><span>100</span></SliderLegend>
                    <Slider id="threshold" type="range" min={0} max={100} defaultValue={90} />
                  </Field>
                  <CreateButton type="button">Create</CreateButton>
                  <ErrorText>Cast to String failed for value "[ 'ID', 'Steps', 'Expected_result' ]" at path "coloumn"</ErrorText>
                </Form>
              </FormArea>
              <ChatButton aria-label="Chat"><ChatBubble /></ChatButton>
            </Page>
            <ScrollRail>
              <Arrow />
              <ScrollTrack><ScrollThumb /></ScrollTrack>
              <Arrow $down />
            </ScrollRail>
          </Viewport>

          <Shelf>
            <Bookmark href="#" $gap={16}><Excel />Missing Test Case....xlsx</Bookmark>
            <Spacer $w={23} />
            <IconButton aria-label="Download options"><Chevron size={14} w={2} color="#b5b8bc" /></IconButton>
            <VLine $h={45} $c="#5c5e62" $m="0 0 0 9px" />
            <Spacer />
            <ShowAll>Show all</ShowAll>
            <IconButton aria-label="Close downloads" $w={47}><Cross size={13} w={1.7} color="#c4c7ca" /></IconButton>
          </Shelf>
        </Window>
        <SessionHandle aria-label="Session toolbar"><Line size={15} w={1.4} box={15} color="#fff"><path d="M0 2.500h15M0 7h15M0 11.500h15" /></Line></SessionHandle>
        <Wallpaper><Grass /></Wallpaper>
      </Remote>

      <Taskbar $bg="#162103">
        <TaskButton aria-label="Remote start"><WindowsLogo /></TaskButton>
        <TaskButton aria-label="Remote search"><Magnifier /></TaskButton>
        <TaskButton aria-label="Remote task view"><TaskView /></TaskButton>
        <Spacer $w={4} />
        <TaskButton aria-label="Chrome" $bg="#2f5209" $bar="#b0d388" $wide><ChromeIcon /></TaskButton>
        <TaskButton aria-label="Remote file explorer" $w={61} $bar="#b0d388" $double><Folder light="#ffe9a2" accent="#3fb6e8" /></TaskButton>
        <TaskButton aria-label="Skype" $w={61} $bar="#b0d388" $double><Skype /></TaskButton>
        <TaskButton aria-label="Word" $w={61} $bar="#b0d388"><Word /></TaskButton>
        <TaskButton aria-label="Notepad++" $w={61} $bar="#b0d388"><Notepad /></TaskButton>
        <Spacer $w={7} />
        <TaskButton aria-label="7-Zip" $w={50} $bg="linear-gradient(to right, #2f7426 22%, #2b391b 22%)" $bar="#47e834" $wide><SevenZip /></TaskButton>
        <Spacer $w={5} />
        <TaskButton aria-label="Command prompt" $w={61} $bar="#b0d388" $double><Terminal /></TaskButton>
        <Tray>
          <IconButton aria-label="Remote hidden icons" $w={30}><Chevron /></IconButton>
          <IconButton aria-label="Remote network" $w={29}><Line size={20} w={1.4} color="#eee"><path d="M6 3h13v11H3.500V8M10 14v4M7 18h7M1 2v3.500h4V2M3 5v3" strokeLinecap="butt" /></Line></IconButton>
          <IconButton aria-label="Remote sound muted" $w={30}>
            <svg width="22" height="20" viewBox="0 0 22 20"><path d="M1 6.500h3L8.500 2v14L4 12H1z" fill="none" stroke="#eee" strokeWidth="1.400" /><circle cx="16" cy="13.500" r="5.500" fill="#e02b3c" /><path d="M13.800 11.300l4.400 4.400M18.200 11.300l-4.400 4.400" stroke="#fff" strokeWidth="1.600" /></svg>
          </IconButton>
          <Clock $w={82}>5:16 PM<br />3/11/2020</Clock>
          <IconButton aria-label="Remote notifications" $w={60}>
            <svg width="32" height="32" viewBox="0 0 32 32"><path d="M1 3h21v16h-9l-4 4v-4H1z" fill="#fff" /><path d="M4 7h14M4 11h14M4 15h10" stroke="#162103" strokeWidth="1.400" /><circle cx="22" cy="22" r="9.500" fill="#2c5a12" stroke="#8aa86f" /><text x="22" y="28" textAnchor="middle" fontSize="16" fontFamily="Open Sans" fill="#fff">1</text></svg>
          </IconButton>
          <VLine $h={50} $c="#4f5a3e" $m="0 5px 0 0" />
        </Tray>
      </Taskbar>

      <Taskbar $bg="#1f1f1f">
        <TaskButton aria-label="Start"><WindowsLogo /></TaskButton>
        <SearchBox><Magnifier /><input type="search" aria-label="Search" placeholder="Type here to search" /></SearchBox>
        <TaskButton aria-label="Cortana"><Line size={20} w={2.6} color="#fff"><circle cx="10" cy="10" r="8.300" /></Line></TaskButton>
        <TaskButton aria-label="Task view"><TaskView /></TaskButton>
        <Spacer $w={4} />
        <TaskButton aria-label="Firefox" $w={61} $bg="#4a4a4a" $bar="#76f06a" $wide><Firefox size={30} /></TaskButton>
        <TaskButton aria-label="File explorer" $w={62}><Folder light="#ffd766" accent="#3a96dd" /></TaskButton>
        <TaskButton aria-label="Android Studio" $w={62}><Studio /></TaskButton>
        <TaskButton aria-label="Microsoft Store" $w={62}><Store /></TaskButton>
        <TaskButton aria-label="Mail" $w={62}><Mail /></TaskButton>
        <TaskButton aria-label="Offers" $w={62}><Gift /></TaskButton>
        <Tray>
          <IconButton aria-label="Hidden icons" $w={29}><Chevron /></IconButton>
          <IconButton aria-label="Battery" $w={31}><svg width="20" height="16" viewBox="0 0 20 16"><path d="M5 3.500h13v10H3V8M18 6.500h1.500v4H18" fill="none" stroke="#fff" strokeWidth="1.300" /><path d="M6 5.500h10v6H5z" fill="#fff" /><path d="M1 0v2M4 0v2M.5 2h4v3h-4zM2.500 5v3" stroke="#fff" /></svg></IconButton>
          <IconButton aria-label="Wi-Fi" $w={31}><Line size={18} w={1.3} color="#eee" box={18}><path d="M1 16C1 8 8 1 16 1M5 16.500C5 10 10 5 16 5M9 16.500C9 12 12 9 16 9" /><circle cx="14.500" cy="15" r="1.500" fill="#fff" /></Line></IconButton>
          <IconButton aria-label="Sound" $w={27}><Line size={20} w={1.3} color="#eee"><path d="M1 7h3l4.500-4v14L4 13H1zM11.500 8c1 1.200 1 2.800 0 4M14.500 6c2 2.400 2 5.600 0 8" /><path d="M17 3.500c3 4 3 9 0 13" stroke="#888" /></Line></IconButton>
          <IconButton aria-label="Language" $w={48}>ENG</IconButton>
          <Clock $w={88}>17:16<br />11-03-2020</Clock>
          <Spacer $w={5} />
          <IconButton aria-label="Notifications centre" $w={60}><Line size={22} w={1.4} color="#fff" box={22}><path d="M1 1.500h20v16h-7l-3 3-3-3H1z" /></Line></IconButton>
          <VLine $h={50} $c="#555" $m="0 5px 0 0" />
        </Tray>
      </Taskbar>
    </Screen>
  );
}
